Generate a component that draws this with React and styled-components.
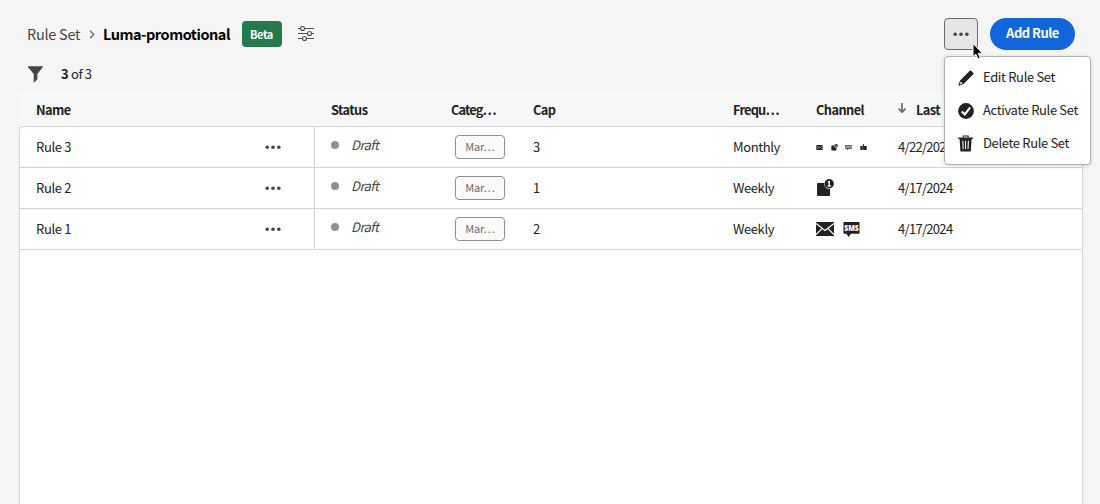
import React from 'react';
import styled, { createGlobalStyle, css } from 'styled-components';

const GlobalStyle = createGlobalStyle`
  * { box-sizing: border-box; }
  body {
    margin: 0;
    background: #f5f5f5;
    color: #222;
    font-family: 'Noto Sans CJK SC', 'Open Sans', sans-serif;
    font-size: 13px;
    overflow: hidden;
  }
  svg { display: block; flex: none; }
`;

const Page = styled.div`
  height: 504px;
  display: flex;
  flex-direction: column;
`;

const Text = styled.span`
  white-space: pre;
  letter-spacing: ${(p) => p.$ls ?? -0.35}px;
`;

const Header = styled.header`
  height: 56px;
  padding: 12px 25px 0 27px;
  display: flex;
  align-items: center;
  flex: none;
`;

const Crumb = styled(Text)`
  font-size: 14.5px;
  line-height: 20px;
  letter-spacing: ${(p) => (p.$current ? -0.47 : -0.27)}px;
  color: ${(p) => (p.$current ? '#000' : '#464646')};
  font-weight: ${(p) => (p.$current ? 700 : 400)};
  width: ${(p) => (p.$current ? 128 : 54)}px;
`;

const CrumbArrow = styled.svg`
  margin: 1px 8px 0 8px;
`;

const Badge = styled.span`
  width: 40px;
  height: 26px;
  margin: 0 16px 0 11px;
  padding: 0 1px 1px 0;
  border-radius: 4px;
  background: #247a4d;
  color: #fff;
  font-size: 11px;
  font-weight: 700;
  letter-spacing: -0.45px;
  display: flex;
  align-items: center;
  justify-content: center;
`;

const Actions = styled.div`
  margin-left: auto;
  display: flex;
  gap: 12px;
  position: relative;
`;

const MoreButton = styled.button`
  width: 34px;
  height: 32px;
  padding: 0;
  border: 1px solid #6d6d6d;
  border-radius: 4px;
  background: #e6e6e6;
  display: flex;
  align-items: center;
  justify-content: center;
`;

const PrimaryButton = styled.button`
  width: 85px;
  height: 32px;
  padding: 0 0 3px;
  border: 0;
  border-radius: 16px;
  background: #1266db;
  color: #fff;
  font: inherit;
  font-weight: 700;
`;

const Menu = styled.div`
  position: absolute;
  z-index: 2;
  top: 38px;
  left: 0;
  width: 147px;
  height: 109px;
  padding: 4px 0;
  border: 1px solid #b1b1b1;
  border-radius: 4px;
  background: #fff;
  box-shadow: 0 1px 4px rgba(0, 0, 0, 0.15);
`;

const MenuItem = styled.div`
  height: 33px;
  padding-left: 13px;
  display: flex;
  align-items: center;
  gap: 9px;

  span {
    padding-bottom: 2px;
  }
`;

const Cursor = styled.svg`
  position: absolute;
  z-index: 3;
  top: 24px;
  left: 27px;
`;

const FilterBar = styled.div`
  height: 36px;
  padding-left: 27px;
  display: flex;
  align-items: center;
  gap: 17px;
  flex: none;

  span {
    padding-bottom: 2px;
  }
`;

const Table = styled.section`
  margin: 0 17px 0 19px;
  flex: 1;
  display: flex;
  flex-direction: column;
`;

const columns = css`
  display: grid;
  grid-template-columns: 295px 120px 82px 200px 83px 82px 1fr;
  align-items: center;
`;

const HeadRow = styled.div`
  ${columns}
  height: 34px;
  padding-left: 1px;
  background: #f8f8f8;
  font-weight: 700;
`;

const HeadText = styled(Text)`
  font-size: 12.8px;
  letter-spacing: ${(p) => p.$ls ?? -0.58}px;
`;

const Body = styled.div`
  flex: 1;
  border: 1px solid #d3d3d3;
  border-bottom: 0;
  border-radius: 4px 4px 0 0;
  background: #fff;
`;

const Row = styled.div`
  ${columns}
  height: 41px;
  border-bottom: 1px solid #d3d3d3;
`;

const Cell = styled.div`
  height: 100%;
  padding-left: 16px;
  display: flex;
  align-items: center;

  ${Row} & > ${Text} {
    padding-bottom: 2px;
  }
`;

const NameCell = styled(Cell)`
  border-right: 1px solid #d3d3d3;
  justify-content: space-between;
  padding-right: 32px;
`;

const StatusCell = styled(Cell)`
  gap: 12px;
  padding-bottom: 4px;
  font-style: italic;
  color: #464646;
`;

const Dot = styled.i`
  width: 8px;
  height: 8px;
  border-radius: 50%;
  background: #909090;
`;

const Tag = styled.span`
  width: 50px;
  height: 24px;
  margin-left: 4px;
  padding-bottom: 2px;
  border: 1px solid #909090;
  border-radius: 4px;
  background: #fafafa;
  color: #6d6d6d;
  font-size: 11px;
  letter-spacing: -0.2px;
  flex: none;
  display: flex;
  align-items: center;
  justify-content: center;
`;

const ChannelCell = styled(Cell)`
  gap: ${(p) => (p.$small ? 7.5 : 8.5)}px;
`;

const SortHead = styled(Cell)`
  gap: 9px;

  svg {
    margin-bottom: 2px;
  }
`;

const Dots = () => (
  <svg width="17" height="5" viewBox="0 0 17 5" fill="#464646">
    <circle cx="2.2" cy="2.3" r="1.8" />
    <circle cx="8" cy="2.3" r="1.8" />
    <circle cx="13.8" cy="2.3" r="1.8" />
  </svg>
);

const Sliders = () => (
  <svg width="16" height="16" viewBox="0 0 16 16" fill="#f5f5f5" stroke="#505050" strokeWidth="1.1">
    <path d="M0 2.5h16M0 7.5h16M0 12.5h16" />
    <circle cx="4.5" cy="2.5" r="2" />
    <circle cx="11.5" cy="7.5" r="2" />
    <circle cx="6.5" cy="12.5" r="2" />
  </svg>
);

const Funnel = () => (
  <svg width="17" height="17" viewBox="0 0 17 17" fill="#464646">
    <path d="M1.2.3h14.3c.5 0 .7.5.4.8L10.4 8v5.2L6.7 16.7V8L.9 1.1C.6.7.8.3 1.2.3z" />
  </svg>
);

const Mail = ({ w = 18, h = 14 }) => (
  <svg width={w} height={h} viewBox="0 0 18 14">
    <path d="M0 0h18v14H0z" fill="#222" />
    <path d="M0 1.5l9 7 9-7M0 12.7l6-6M18 12.7l-6-6" fill="none" stroke="#fff" strokeWidth="1.2" />
  </svg>
);

const InApp = ({ s = 18 }) => (
  <svg width={s} height={s} viewBox="0 0 18 18">
    <path d="M2 4.1h6a5.5 5.5 0 0 0 6 5.9V16a1 1 0 0 1-1 1H2a1 1 0 0 1-1-1V5.1a1 1 0 0 1 1-1z" fill="#222" />
    <circle cx="13.2" cy="4.7" r="4.7" fill="#222" />
    <path d="M11.7 3.3l1.5-.8v4.6M11.6 7h3.2" fill="none" stroke="#fff" strokeWidth="1.3" />
  </svg>
);

const SmsIcon = styled.svg`
  overflow: visible;
`;

const Sms = () => (
  <SmsIcon width="17" height="15" viewBox="0 0 17 15">
    <path d="M.5 0h16v11.8H8L5.5 15l-2-3.2h-3z" fill="#222" />
    <text x="8.5" y="8.7" textAnchor="middle" fill="#fff" fontFamily="Open Sans" fontSize="8" fontWeight="800" textLength="14.6" lengthAdjust="spacingAndGlyphs">SMS</text>
  </SmsIcon>
);

const SmallSms = () => (
  <svg width="7" height="7" viewBox="0 0 7 7" fill="#555">
    <path d="M.3 1h6.4v4H3.8L2.5 6.2 2 5H.3z" />
    <path d="M1 2.3h5M1 3.6h5" stroke="#ccc" strokeWidth=".7" />
  </svg>
);

const SmallMailbox = () => (
  <svg width="7" height="7" viewBox="0 0 7 7" fill="#222">
    <path d="M.3 2h2.4v4H.3zM3.1 2h3.6v4H3.1z" />
    <path d="M2.8 .2h1.3v2.6H2.8z" />
  </svg>
);

const Pencil = () => (
  <svg width="16" height="16" viewBox="0 0 16 16" fill="#222">
    <path d="M11.8.7c.4-.4.9-.4 1.3 0l2.2 2.2c.4.4.4.9 0 1.3l-9.7 9.7L.7 15.8c-.3.1-.5-.1-.4-.4L2.1 10.4z" />
    <path d="M1.7 14.4l1.1-3 1.9 1.9z" fill="#fff" />
  </svg>
);

const Check = () => (
  <svg width="16" height="16" viewBox="0 0 16 16">
    <circle cx="8" cy="8" r="7.9" fill="#222" />
    <path d="M3.8 8.4l3 3 5.4-7" fill="none" stroke="#fff" strokeWidth="2.1" />
  </svg>
);

const Trash = () => (
  <svg width="16" height="17" viewBox="0 0 16 17" fill="none" stroke="#222">
    <path d="M5.2 2.5V1h5v1.5" strokeWidth="1.2" />
    <path d="M.3 2.5h14.6v1.6H13.6L12.8 16.5H2.4L1.6 4.1H.3z" fill="#222" stroke="none" />
    <path d="M4.8 5.8l.4 8.3M7.6 5.8v8.3M10.4 5.8l-.4 8.3" stroke="#fff" strokeWidth="1" />
  </svg>
);

const SortArrow = () => (
  <svg width="9" height="11" viewBox="0 0 9 11" fill="none" stroke="#6d6d6d" strokeWidth="1.7">
    <path d="M4 0v9M.5 5.6l3.5 3.6 3.5-3.6" />
  </svg>
);

const allChannels = (
  <>
    <Mail w={7} h={5} />
    <InApp s={7} />
    <SmallSms />
    <SmallMailbox />
  </>
);

const rules = [
  { name: 'Rule 3', cap: 3, freq: 'Monthly', date: '4/22/2024', small: true, icons: allChannels },
  { name: 'Rule 2', cap: 1, freq: 'Weekly', date: '4/17/2024', icons: <InApp /> },
  { name: 'Rule 1', cap: 2, freq: 'Weekly', date: '4/17/2024', icons: <><Mail /><Sms /></> },
];

export default function App() {
  return (
    <Page>
      <GlobalStyle />
      <Header>
        <Crumb>Rule Set</Crumb>
        <CrumbArrow width="6" height="9" viewBox="0 0 6 9" fill="none" stroke="#6d6d6d" strokeWidth="1.3">
          <path d="M1 .7l3.8 3.8L1 8.3" />
        </CrumbArrow>
        <Crumb $current>Luma-promotional</Crumb>
        <Badge>Beta</Badge>
        <Sliders />
        <Actions>
          <MoreButton><Dots /></MoreButton>
          <PrimaryButton><Text $ls={-0.5}>Add Rule</Text></PrimaryButton>
          <Menu>
            <MenuItem><Pencil /><Text>Edit Rule Set</Text></MenuItem>
            <MenuItem><Check /><Text>Activate Rule Set</Text></MenuItem>
            <MenuItem><Trash /><Text>Delete Rule Set</Text></MenuItem>
          </Menu>
          <Cursor width="14" height="20" viewBox="0 0 14 20">
            <path d="M2 1.5v13.2l2.8-2.6 2.2 5 2.3-1-2.1-4.8h4.3z" fill="#000" stroke="#fff" strokeWidth="1" />
          </Cursor>
        </Actions>
      </Header>
      <FilterBar>
        <Funnel />
        <Text><b>3</b> of 3</Text>
      </FilterBar>
      <Table>
        <HeadRow>
          <Cell><HeadText>Name</HeadText></Cell>
          <Cell><HeadText>Status</HeadText></Cell>
          <Cell><HeadText $ls={-0.85}>Categ…</HeadText></Cell>
          <Cell><HeadText>Cap</HeadText></Cell>
          <Cell><HeadText $ls={-0.8}>Frequ…</HeadText></Cell>
          <Cell><HeadText>Channel</HeadText></Cell>
          <SortHead><SortArrow /><HeadText>Last</HeadText></SortHead>
        </HeadRow>
        <Body>
          {rules.map((r) => (
            <Row key={r.name}>
              <NameCell><Text>{r.name}</Text><Dots /></NameCell>
              <StatusCell><Dot /><Text $ls={-0.55}>Draft</Text></StatusCell>
              <Cell><Tag>Mar…</Tag></Cell>
              <Cell><Text>{r.cap}</Text></Cell>
              <Cell><Text $ls={-0.4}>{r.freq}</Text></Cell>
              <ChannelCell $small={r.small}>{r.icons}</ChannelCell>
              <Cell><Text $ls={-0.7}>{r.date}</Text></Cell>
            </Row>
          ))}
        </Body>
      </Table>
    </Page>
  );
}
